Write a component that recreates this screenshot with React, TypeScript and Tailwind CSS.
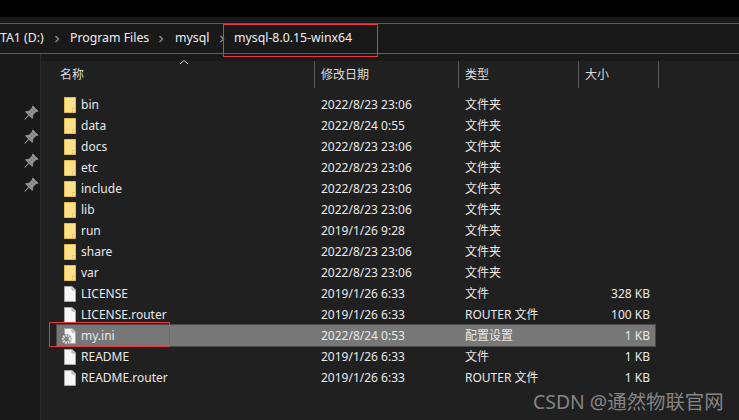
import { BsPinAngleFill } from 'react-icons/bs'

const font = "font-['Noto_Sans','Noto_Sans_CJK_SC',sans-serif]"

type Row = { name: string; date: string; type: string; size?: string; kind: 'folder' | 'file' | 'ini' }

const rows: Row[] = [
  { name: 'bin', date: '2022/8/23 23:06', type: '文件夹', kind: 'folder' },
  { name: 'data', date: '2022/8/24 0:55', type: '文件夹', kind: 'folder' },
  { name: 'docs', date: '2022/8/23 23:06', type: '文件夹', kind: 'folder' },
  { name: 'etc', date: '2022/8/23 23:06', type: '文件夹', kind: 'folder' },
  { name: 'include', date: '2022/8/23 23:06', type: '文件夹', kind: 'folder' },
  { name: 'lib', date: '2022/8/23 23:06', type: '文件夹', kind: 'folder' },
  { name: 'run', date: '2019/1/26 9:28', type: '文件夹', kind: 'folder' },
  { name: 'share', date: '2022/8/23 23:06', type: '文件夹', kind: 'folder' },
  { name: 'var', date: '2022/8/23 23:06', type: '文件夹', kind: 'folder' },
  { name: 'LICENSE', date: '2019/1/26 6:33', type: '文件', size: '328 KB', kind: 'file' },
  { name: 'LICENSE.router', date: '2019/1/26 6:33', type: 'ROUTER 文件', size: '100 KB', kind: 'file' },
  { name: 'my.ini', date: '2022/8/24 0:53', type: '配置设置', size: '1 KB', kind: 'ini' },
  { name: 'README', date: '2019/1/26 6:33', type: '文件', size: '1 KB', kind: 'file' },
  { name: 'README.router', date: '2019/1/26 6:33', type: 'ROUTER 文件', size: '1 KB', kind: 'file' },
]

function FolderIcon() {
  return (
    <svg width="12" height="16" viewBox="0 0 12 16">
      <path d="M0.5 0.5H11.5V15.5H0.5Z" fill="#fde08a" stroke="#e8bd50" />
      <path d="M8.5 15V11.5H11V15Z" fill="#fff1c2" stroke="#e8bd50" strokeWidth="0.8" />
    </svg>
  )
}

function FileIcon({ gear }: { gear?: boolean }) {
  return (
    <svg width="12" height="16" viewBox="0 0 12 16" className="overflow-visible">
      <path d="M0.5 0.5H8L11.5 4V15.5H0.5Z" fill="#f6f6f6" stroke="#a8a8a8" />
      <path d="M8 0.5V4H11.5" fill="#d8d8d8" stroke="#a8a8a8" />
      {gear && (
        <g transform="translate(-2.5 6)">
          <circle cx="5" cy="5" r="5" fill="#777777" />
          <circle cx="5" cy="5" r="3.4" fill="none" stroke="#dcdcdc" strokeWidth="2.6" strokeDasharray="1.6 0.8" />
          <circle cx="5" cy="5" r="1.5" fill="#808080" />
        </g>
      )}
    </svg>
  )
}

function Chevron() {
  return (
    <svg width="6" height="8" viewBox="0 0 6 8" className="shrink-0">
      <path d="M1.5 1L4.5 4L1.5 7" fill="none" stroke="#8a8a8a" strokeWidth="1.4" />
    </svg>
  )
}

export default function App() {
  return (
    <div className={`relative h-[420px] w-[739px] overflow-hidden bg-[#191919] text-[12px] text-[#e8e8e8] ${font}`}>
      <div className="h-[17px] bg-black" />
      <div className="h-[6px]" />

      {/* address bar */}
      <div className="flex h-[31px] items-center overflow-hidden border-y border-[#5c5c5c] bg-[#191919] text-[12.3px] text-[#f0f0f0]">
        <span className="w-[54px] shrink-0 whitespace-nowrap">TA1 (D:)</span>
        <Chevron />
        <span className="ml-[10px] w-[88px] shrink-0">Program Files</span>
        <Chevron />
        <span className="ml-[11px] w-[44px] shrink-0">mysql</span>
        <Chevron />
        <span className="ml-[9px] whitespace-nowrap">mysql-8.0.15-winx64</span>
      </div>

      <div className="flex h-[366px]">
        {/* nav pane */}
        <div className="flex w-[41px] shrink-0 flex-col items-end gap-[8px] border-r border-[#2b2b2b] pt-[51px] pr-[1px] text-[#8c8c8c]">
          <BsPinAngleFill size={16} />
          <BsPinAngleFill size={16} />
          <BsPinAngleFill size={16} />
          <BsPinAngleFill size={16} />
        </div>

        {/* file list */}
        <div className="flex-1">
          <div className="h-[7px] bg-[#191919]" />
          <div className="relative bg-[#202020]">
            <span className="absolute left-[137px] top-[-2px] text-[#c8c8c8]">
              <svg width="12" height="6" viewBox="0 0 12 6">
                <path d="M2 5L6 1.5L10 5" fill="none" stroke="currentColor" />
              </svg>
            </span>
            <div className="flex h-[27px] items-center text-[#dcdcdc]">
              <div className="flex h-full w-[274px] items-center border-r border-[#5c5c5c] pl-[19px]">名称</div>
              <div className="flex h-full w-[144px] items-center border-r border-[#5c5c5c] pl-[6px]">修改日期</div>
              <div className="flex h-full w-[120px] items-center border-r border-[#5c5c5c] pl-[6px]">类型</div>
              <div className="flex h-full w-[80px] items-center border-r border-[#5c5c5c] pl-[6px]">大小</div>
            </div>
            <div className="h-[339px] pt-[6px]">
              {rows.map(r => {
                const selected = r.kind === 'ini'
                return (
                  <div
                    key={r.name}
                    className={`ml-[16px] flex h-[21px] w-[598px] items-center ${selected ? 'bg-[#777777] outline outline-[#4a4a4a]' : ''}`}
                  >
                    <div className="flex w-[264px] items-center gap-[5px] pl-[7px]">
                      {r.kind === 'folder' ? <FolderIcon /> : <FileIcon gear={r.kind === 'ini'} />}
                      <span className="whitespace-nowrap">{r.name}</span>
                    </div>
                    <div className="w-[144px] whitespace-nowrap">{r.date}</div>
                    <div className="w-[120px] whitespace-nowrap">{r.type}</div>
                    <div className="w-[65px] text-right whitespace-nowrap">{r.size}</div>
                  </div>
                )
              })}
            </div>
          </div>
        </div>
      </div>

      {/* red annotation boxes */}
      <div className="absolute left-[223px] top-[24px] h-[33px] w-[155px] border border-[#e8383d]" />
      <div className="absolute left-[49px] top-[322px] h-[25px] w-[121px] border border-[#e8383d]" />

      {/* watermark */}
      <div className="absolute left-[533px] top-[387px] text-[19.4px] whitespace-nowrap text-[#a0a0a0]/80">CSDN @通然物联官网</div>
    </div>
  )
}
